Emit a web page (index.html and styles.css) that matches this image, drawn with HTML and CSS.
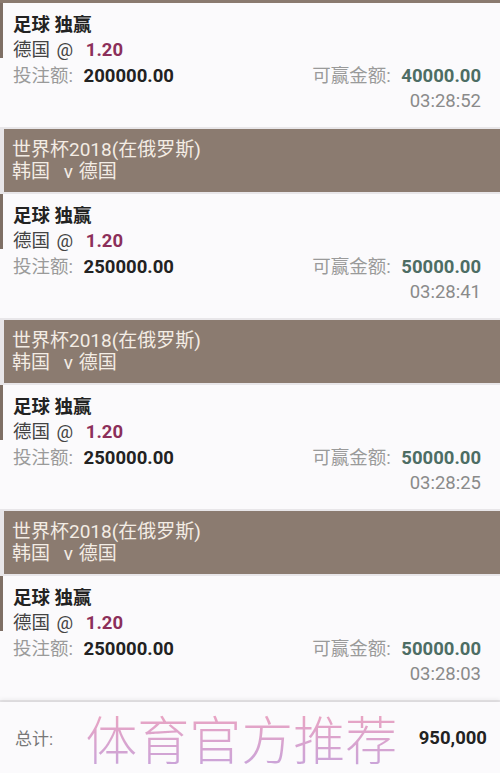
FILE: index.html
```html
<!DOCTYPE html>
<html lang="zh-CN">
<head>
  <meta charset="UTF-8" />
  <meta name="viewport" content="width=device-width, initial-scale=1" />
  <title>投注记录</title>
  <link rel="stylesheet" href="styles.css">
</head>
<body>
  <div class="page">
    <div class="top-bar"></div>

    <div class="bet-card">
      <div class="bet-title">足球 独赢</div>
      <div class="bet-pick">德国 <span class="at">@</span> <span class="odds">1.20</span></div>
      <div class="bet-row">
        <span><span class="label">投注额:</span> <span class="stake">200000.00</span></span>
        <span><span class="label">可赢金额:</span> <span class="win">40000.00</span></span>
      </div>
      <div class="bet-time">03:28:52</div>
    </div>

    <div class="match-head">
      <div>世界杯2018(在俄罗斯)</div>
      <div>韩国 <span class="vs">v</span> 德国</div>
    </div>
    <div class="bet-card">
      <div class="bet-title">足球 独赢</div>
      <div class="bet-pick">德国 <span class="at">@</span> <span class="odds">1.20</span></div>
      <div class="bet-row">
        <span><span class="label">投注额:</span> <span class="stake">250000.00</span></span>
        <span><span class="label">可赢金额:</span> <span class="win">50000.00</span></span>
      </div>
      <div class="bet-time">03:28:41</div>
    </div>

    <div class="match-head">
      <div>世界杯2018(在俄罗斯)</div>
      <div>韩国 <span class="vs">v</span> 德国</div>
    </div>
    <div class="bet-card">
      <div class="bet-title">足球 独赢</div>
      <div class="bet-pick">德国 <span class="at">@</span> <span class="odds">1.20</span></div>
      <div class="bet-row">
        <span><span class="label">投注额:</span> <span class="stake">250000.00</span></span>
        <span><span class="label">可赢金额:</span> <span class="win">50000.00</span></span>
      </div>
      <div class="bet-time">03:28:25</div>
    </div>

    <div class="match-head">
      <div>世界杯2018(在俄罗斯)</div>
      <div>韩国 <span class="vs">v</span> 德国</div>
    </div>
    <div class="bet-card">
      <div class="bet-title">足球 独赢</div>
      <div class="bet-pick">德国 <span class="at">@</span> <span class="odds">1.20</span></div>
      <div class="bet-row">
        <span><span class="label">投注额:</span> <span class="stake">250000.00</span></span>
        <span><span class="label">可赢金额:</span> <span class="win">50000.00</span></span>
      </div>
      <div class="bet-time">03:28:03</div>
    </div>

    <div class="total-bar">
      <span class="total-label">总计:</span>
      <span class="watermark">体育官方推荐</span>
      <span class="total-value">950,000</span>
    </div>
  </div>
</body>
</html>
```

FILE: styles.css
```css
html, body {
  margin: 0;
  padding: 0;
}
body {
  font-family: Roboto, "Noto Sans CJK SC", sans-serif;
  background-color: #e8e6e9;
  width: 500px;
  height: 773px;
  overflow: hidden;
}
.page {
  display: flex;
  flex-direction: column;
  gap: 2px;
}
.top-bar {
  height: 3px;
  background-color: #8a7a6f;
  margin-bottom: -2px;
}
.bet-card {
  height: 124px;
  box-sizing: border-box;
  padding: 10px 19px 0 13px;
  background-color: #fbfafc;
  background-image: linear-gradient(#7e6f65, #7e6f65);
  background-size: 3px 55px;
  background-position: left top;
  background-repeat: no-repeat;
  font-size: 18.5px;
  line-height: 25px;
  color: #333;
}
.bet-title {
  font-weight: bold;
  color: #222;
}
.bet-pick {
  color: #444;
}
.at {
  margin: 0 4px 0 2px;
}
.odds {
  font-weight: bold;
  color: #8c2f5a;
  margin-left: 4px;
}
.bet-row {
  display: flex;
  justify-content: space-between;
  margin-top: 1px;
}
.label {
  color: #9a9a9a;
}
.stake {
  font-weight: bold;
  color: #222;
  margin-left: 6px;
}
.win {
  font-weight: bold;
  color: #4d6d64;
  margin-left: 6px;
}
.bet-time {
  text-align: right;
  color: #8a8a8a;
}
.match-head {
  height: 63px;
  box-sizing: border-box;
  margin-left: 4px;
  padding: 10px 8px 0 8px;
  background-color: #8b7b70;
  color: #f3ece4;
  font-size: 19px;
  line-height: 22px;
}
.vs {
  margin: 0 1px 0 9px;
}
.total-bar {
  height: 71px;
  box-sizing: border-box;
  display: flex;
  align-items: center;
  padding: 0 13px 0 15px;
  background-color: #fbfafc;
  box-shadow: 0 -3px 4px rgba(0, 0, 0, 0.06);
}
.total-label {
  font-size: 17px;
  color: #777;
}
.watermark {
  margin: 10px 0 0 32px;
  font-size: 52px;
  line-height: 60px;
  font-weight: 300;
  background-image: linear-gradient(#eaa4c2, #c6a4dc);
  -webkit-background-clip: text;
  background-clip: text;
  color: transparent;
}
.total-value {
  margin-left: auto;
  font-size: 18.5px;
  font-weight: bold;
  color: #222;
}
```
